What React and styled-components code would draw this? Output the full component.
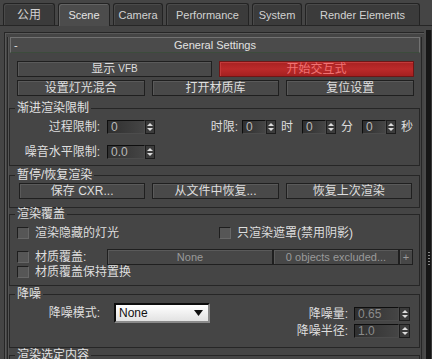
import React from 'react'
import styled, { createGlobalStyle } from 'styled-components'

const GlobalStyle = createGlobalStyle`
  html, body {
    margin: 0;
    padding: 0;
    background: #454545;
  }
  body {
    font-family: "Liberation Sans", "Noto Sans CJK SC", sans-serif;
    font-size: 12px;
    line-height: 14px;
    color: #dedede;
  }
  * {
    box-sizing: border-box;
  }
`;

const Window = styled.div`
  width: 432px;
  height: 359px;
  overflow: hidden;
  display: flex;
  flex-direction: column;
  background: #454545;
`;

const TabBar = styled.div`
  display: flex;
  align-items: flex-start;
  gap: 3px;
  height: 26px;
  padding: 3px 0 0 3px;
  border-bottom: 1px solid #262626;
  flex-shrink: 0;
`;

const Tab = styled.div`
  width: ${p => p.$w}px;
  height: ${p => (p.$active ? 23 : 22)}px;
  display: flex;
  align-items: center;
  justify-content: center;
  border: 1px solid #232323;
  border-bottom: none;
  border-radius: 3px 3px 0 0;
  background: ${p => (p.$active ? '#4c4c4c' : '#3b3b3b')};
  box-shadow: inset 1px 1px 0 ${p => (p.$active ? '#636363' : '#4a4a4a')};
  color: ${p => (p.$active ? '#e4e4e4' : '#d2d2d2')};
  font-size: ${p => (p.$cjk ? 12 : 11)}px;
`;

const Body = styled.div`
  flex: 1;
  display: flex;
  min-height: 0;
  padding-top: 6px;
`;

const Panel = styled.div`
  flex: 1;
  margin-left: 4px;
  padding: 4px 2px 0 2px;
  border-left: 1px solid #262626;
  border-top: 1px solid #262626;
  box-shadow: inset 1px 1px 0 #585858;
  overflow: hidden;
`;

const ScrollTrack = styled.div`
  width: 8px;
  margin-top: -2px;
  background: #161616;
  border-left: 2px solid #4a4a4a;
  border-right: 1px solid #3a3a3a;
  display: flex;
  flex-direction: column;
  align-items: center;
`;

const Grip = styled.div`
  width: 2px;
  height: 14px;
  margin-top: 222px;
  background: repeating-linear-gradient(#888 0 1px, transparent 1px 3px);
`;

const Rollout = styled.div`
  border-left: 1px solid #262626;
  border-right: 1px solid #262626;
  box-shadow: inset 1px 0 0 #555;
`;

const RolloutHeader = styled.div`
  height: 16px;
  margin: 0 1px 0 2px;
  display: flex;
  align-items: center;
  background: #4b4b4b;
  border: 1px solid;
  border-color: #727272 #727272 #3c4c3c #727272;
  font-size: 11px;
  color: #e2e2e2;
`;

const Collapse = styled.span`
  width: 14px;
  padding-left: 3px;
`;

const HeaderTitle = styled.span`
  flex: 1;
  text-align: center;
  padding-right: 14px;
`;

const ButtonGrid = styled.div`
  display: grid;
  grid-template-columns: repeat(${p => p.$cols}, 1fr);
  column-gap: 7px;
  padding: 0 7px 0 9px;
  margin-top: ${p => p.$top}px;
`;

const Button = styled.div`
  height: 16px;
  width: ${p => (p.$w ? `${p.$w}px` : 'auto')};
  flex-shrink: 0;
  display: flex;
  align-items: center;
  justify-content: center;
  white-space: nowrap;
  font-size: ${p => (p.$latin ? 11 : 12)}px;
  color: ${p => (p.$red ? '#f07272' : p.$dim ? '#9a9a9a' : '#dedede')};
  background: ${p =>
    p.$red
      ? 'linear-gradient(#a82222, #bb2a2a 50%, #a42020)'
      : p.$dim
      ? '#474747'
      : '#494949'};
  border: 1px solid ${p => (p.$red ? '#6e1616' : '#1f1f1f')};
  box-shadow: inset 1px 1px 0 ${p => (p.$red ? '#c43a3a' : '#5a5a5a')};
`;

const Small = styled.span`
  font-size: 10px;
  margin-left: 3px;
`;

const Group = styled.fieldset`
  margin: ${p => p.$top}px 1px 0 1px;
  padding: ${p => p.$pt}px 0 ${p => p.$pb}px 0;
  border: 1px solid #262626;
  min-width: 0;
`;

const GroupLabel = styled.legend`
  margin-left: 5px;
  padding: 0 2px;
  line-height: 12px;
  font-size: 12px;
  color: #e2e2e2;
`;

const Row = styled.div`
  display: flex;
  align-items: center;
  height: ${p => p.$h || 14}px;
  margin-top: ${p => p.$top || 0}px;
  padding-left: ${p => p.$pl || 0}px;
`;

const FieldLabel = styled.span`
  width: ${p => p.$w}px;
  padding-right: ${p => p.$gap}px;
  text-align: right;
  white-space: nowrap;
  flex-shrink: 0;
`;

const Unit = styled.span`
  margin: 0 9px 0 5px;
`;

const SpinBox = styled.div`
  display: flex;
  height: 14px;
`;

const SpinInput = styled.div`
  width: ${p => p.$w}px;
  height: 14px;
  padding-left: 3px;
  background: linear-gradient(to right, #303030, #3b3b3b 55%, #454545);
  border: 1px solid;
  border-color: #0e0e0e #4c4c4c #4c4c4c #0e0e0e;
  color: ${p => (p.$dim ? '#8c8c8c' : '#b8b8b8')};
  font-size: 12px;
  line-height: 12px;
`;

const SpinArrows = styled.div`
  width: ${p => p.$w || 10}px;
  height: 14px;
  display: flex;
  align-items: center;
  justify-content: center;
  background: #3b3b3b;
  border: 1px solid #1c1c1c;
`;

const Spinner = ({ value, w, aw, dim }) => (
  <SpinBox>
    <SpinInput $w={w} $dim={dim}>{value}</SpinInput>
    <SpinArrows $w={aw}>
      <svg width="6" height="10" viewBox="0 0 6 10">
        <polygon points="0,4 3,1 6,4" fill="#dcdcdc" />
        <polygon points="0,6 3,9 6,6" fill="#dcdcdc" />
      </svg>
    </SpinArrows>
  </SpinBox>
);

const CheckGrid = styled.div`
  display: grid;
  grid-template-columns: 202px 1fr;
  height: 14px;
  align-items: center;
  padding-left: 7px;
`;

const CheckItem = styled.div`
  display: flex;
  align-items: center;
  gap: 6px;
  white-space: nowrap;
`;

const Check = styled.span`
  width: 12px;
  height: 12px;
  flex-shrink: 0;
  background: #565656;
  border: 1px solid;
  border-color: #1e1e1e #676767 #676767 #1e1e1e;
`;

const CheckText = styled.span`
  width: ${p => (p.$w ? `${p.$w}px` : 'auto')};
  margin-left: 6px;
  flex-shrink: 0;
  white-space: nowrap;
`;

const DenoiseRow = styled.div`
  display: flex;
  align-items: flex-start;
  padding-right: 9px;
`;

const DenoiseMode = styled.div`
  display: flex;
  align-items: center;
  height: 20px;
`;

const Dropdown = styled.div`
  width: 96px;
  height: 20px;
  display: flex;
  align-items: center;
  justify-content: space-between;
  padding: 0 5px 0 3px;
  background: linear-gradient(#ffffff, #e2e2e2);
  border: 2px solid;
  border-color: #0c0c0c #8a8a8a #8a8a8a #0c0c0c;
  color: #111;
  font-size: 12px;
`;

const DenoiseValues = styled.div`
  margin-left: auto;
  margin-top: 4px;
  display: flex;
  flex-direction: column;
  gap: 3px;
`;

const ValueRow = styled.div`
  display: flex;
  align-items: center;
  justify-content: flex-end;
  height: 14px;
`;

const tabs = [
  { name: '公用', w: 52, cjk: true },
  { name: 'Scene', w: 52, active: true },
  { name: 'Camera', w: 50 },
  { name: 'Performance', w: 83 },
  { name: 'System', w: 50 },
  { name: 'Render Elements', w: 115 },
];

export default function App() {
  return (
    <Window>
      <GlobalStyle />
      <TabBar>
        {tabs.map(t => (
          <Tab key={t.name} $w={t.w} $active={t.active} $cjk={t.cjk}>
            {t.name}
          </Tab>
        ))}
      </TabBar>
      <Body>
        <Panel>
          <Rollout>
            <RolloutHeader>
              <Collapse>-</Collapse>
              <HeaderTitle>General Settings</HeaderTitle>
            </RolloutHeader>

            <ButtonGrid $cols={2} $top={8}>
              <Button>
                显示<Small>VFB</Small>
              </Button>
              <Button $red>开始交互式</Button>
            </ButtonGrid>
            <ButtonGrid $cols={3} $top={3}>
              <Button>设置灯光混合</Button>
              <Button>打开材质库</Button>
              <Button>复位设置</Button>
            </ButtonGrid>

            <Group $top={6} $pt={6} $pb={6}>
              <GroupLabel>渐进渲染限制</GroupLabel>
              <Row>
                <FieldLabel $w={97} $gap={7}>过程限制:</FieldLabel>
                <Spinner value="0" w={38} />
                <FieldLabel $w={87} $gap={4}>时限:</FieldLabel>
                <Spinner value="0" w={24} />
                <Unit>时</Unit>
                <Spinner value="0" w={24} />
                <Unit>分</Unit>
                <Spinner value="0" w={24} />
                <Unit>秒</Unit>
              </Row>
              <Row $top={11}>
                <FieldLabel $w={97} $gap={7}>噪音水平限制:</FieldLabel>
                <Spinner value="0.0" w={38} />
              </Row>
            </Group>

            <Group $top={3} $pt={2} $pb={8}>
              <GroupLabel>暂停/恢复渲染</GroupLabel>
              <ButtonGrid $cols={3} $top={0}>
                <Button>保存 CXR...</Button>
                <Button>从文件中恢复...</Button>
                <Button>恢复上次渲染</Button>
              </ButtonGrid>
            </Group>

            <Group $top={0} $pt={6} $pb={6}>
              <GroupLabel>渲染覆盖</GroupLabel>
              <CheckGrid>
                <CheckItem>
                  <Check />
                  渲染隐藏的灯光
                </CheckItem>
                <CheckItem>
                  <Check />
                  只渲染遮罩(禁用阴影)
                </CheckItem>
              </CheckGrid>
              <Row $h={16} $top={9} $pl={7}>
                <Check />
                <CheckText $w={72}>材质覆盖:</CheckText>
                <Button $w={166} $dim $latin>None</Button>
                <Button $w={126} $dim $latin>0 objects excluded...</Button>
                <Button $w={14} $dim $latin>+</Button>
              </Row>
              <Row $pl={7}>
                <Check />
                <CheckText>材质覆盖保持置换</CheckText>
              </Row>
            </Group>

            <Group $top={2} $pt={3} $pb={9}>
              <GroupLabel>降噪</GroupLabel>
              <DenoiseRow>
                <DenoiseMode>
                  <FieldLabel $w={104} $gap={14}>降噪模式:</FieldLabel>
                  <Dropdown>
                    None
                    <svg width="9" height="6" viewBox="0 0 9 6">
                      <polygon points="0,0 9,0 4.5,6" fill="#111" />
                    </svg>
                  </Dropdown>
                </DenoiseMode>
                <DenoiseValues>
                  <ValueRow>
                    <FieldLabel $w={70} $gap={6}>降噪量:</FieldLabel>
                    <Spinner value="0.65" w={45} aw={11} dim />
                  </ValueRow>
                  <ValueRow>
                    <FieldLabel $w={70} $gap={6}>降噪半径:</FieldLabel>
                    <Spinner value="1.0" w={45} aw={11} dim />
                  </ValueRow>
                </DenoiseValues>
              </DenoiseRow>
            </Group>

            <Group $top={1} $pt={20} $pb={6}>
              <GroupLabel>渲染选定内容</GroupLabel>
            </Group>
          </Rollout>
        </Panel>
        <ScrollTrack>
          <Grip />
        </ScrollTrack>
      </Body>
    </Window>
  )
}
